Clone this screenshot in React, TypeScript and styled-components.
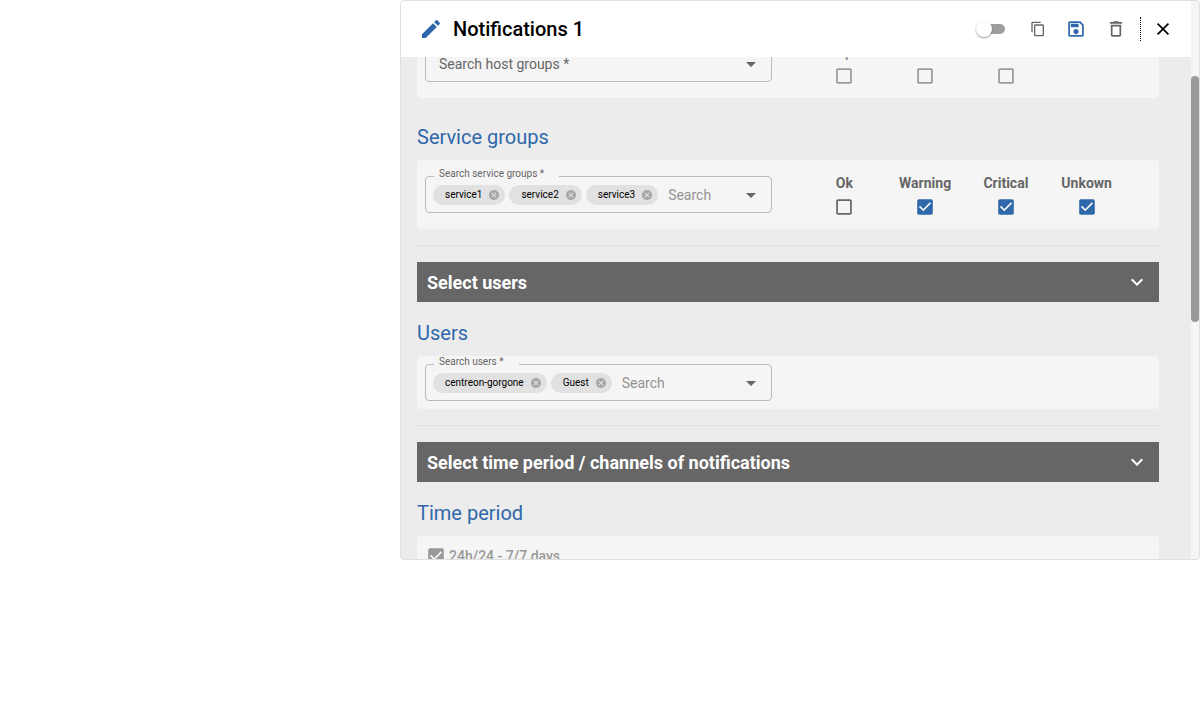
import React, { useLayoutEffect, useRef, useState } from "react";
import styled, { createGlobalStyle } from "styled-components";

const GlobalStyle = createGlobalStyle`
  *, *::before, *::after { box-sizing: border-box; }
  body {
    margin: 0;
    background: #fff;
    color: #000;
    font-family: Roboto, "Liberation Sans", sans-serif;
    font-size: 14px;
  }
  button, input { font: inherit; }
`;

const Panel = styled.section`
  display: flex;
  width: calc(100% / 3 * 2);
  height: calc(100vh - 160px);
  margin-left: auto;
  border: 1px solid #e0e0e0;
  border-radius: 4px;
  background: #ececec;
  overflow: hidden;
`;

const Main = styled.div`
  display: flex;
  flex: 1;
  flex-direction: column;
  min-width: 0;
`;

const ScrollTrack = styled.div`
  flex: 0 0 8px;
  padding-top: 75px;
  background: #f5f5f5;
`;

const ScrollThumb = styled.div`
  height: 51%;
  border-radius: 4px;
  background: #999;
`;

const Header = styled.header`
  display: flex;
  flex: 0 0 56px;
  align-items: center;
  padding: 0 8px 0 18px;
  background: #fff;
`;

const Title = styled.h1`
  flex: 1;
  margin: 0 0 0 10px;
  font-size: 20px;
  font-weight: 500;
  line-height: 32px;
`;

const IconButton = styled.button<{ $width?: number; $color?: string }>`
  display: flex;
  align-items: center;
  justify-content: center;
  width: ${(p) => p.$width ?? 40}px;
  height: 40px;
  padding: 0;
  border: 0;
  background: none;
  color: ${(p) => p.$color ?? "#666"};
  cursor: pointer;
`;

const HeaderDivider = styled.span`
  height: 24px;
  margin: 0 2px 0 4px;
  border-left: 1px dotted #000;
`;

const SwitchInput = styled.input`
  appearance: none;
  width: 26px;
  height: 10px;
  margin: 0 15px 0 0;
  border-radius: 5px;
  background: #9e9e9e;
  cursor: pointer;

  &::before {
    content: "";
    display: block;
    width: 16px;
    height: 16px;
    margin: -3px 0 0 -3px;
    border-radius: 8px;
    background: #fff;
    box-shadow: 0 1px 2px rgba(0, 0, 0, 0.4);
  }
  &:checked { background: #2e68aa; }
  &:checked::before { margin-left: 13px; }
`;

const Body = styled.div`
  flex: 1;
  min-height: 0;
  padding: 0 32px 16px 16px;
  overflow-y: auto;
  scrollbar-width: none;
`;

const GroupTitle = styled.h2<{ $spaced?: boolean }>`
  margin: ${(p) => (p.$spaced ? 24 : 16)}px 0 8px;
  color: #2e68aa;
  font-size: 20px;
  font-weight: 400;
  line-height: 30px;
`;

const Card = styled.div<{ $pad?: number }>`
  display: flex;
  align-items: center;
  gap: 32px;
  padding: ${(p) => p.$pad ?? 8}px 8px;
  border-radius: 4px;
  background: #f5f5f5;
`;

const Rule = styled.hr`
  height: 1px;
  margin: 16px 0;
  border: 0;
  background: #e0e0e0;
`;

const SectionBar = styled.button`
  display: flex;
  align-items: center;
  justify-content: space-between;
  width: 100%;
  height: 40px;
  padding: 0 10px;
  border: 0;
  background: #666;
  color: #fff;
  font-size: 18px;
  font-weight: 700;
  text-align: left;
  cursor: pointer;
`;

const Field = styled.div`
  position: relative;
  display: flex;
  flex: none;
  align-items: center;
  gap: 4px;
  width: calc(50% - 16px);
  height: 37px;
  padding: 0 8px 0 7px;
  border: 1px solid #b9b9b9;
  border-radius: 4px;
`;

const FloatingLabel = styled.label`
  position: absolute;
  top: -9px;
  left: 8px;
  padding: 0 15px 0 5px;
  background: #f5f5f5;
  color: #666;
  font-size: 10px;
  line-height: 12px;
`;

const SearchInput = styled.input<{ $full?: boolean }>`
  flex: 1;
  width: 0;
  min-width: 0;
  padding: 0 6px;
  border: 0;
  outline: 0;
  background: none;
  font-size: 14px;
  line-height: 20px;

  &::placeholder {
    color: ${(p) => (p.$full ? "#666" : "#939393")};
    opacity: 1;
  }
`;

const ArrowButton = styled.button`
  display: flex;
  padding: 0;
  border: 0;
  background: none;
  color: #666;
  cursor: pointer;
`;

const ChipBox = styled.span`
  display: flex;
  flex: none;
  align-items: center;
  gap: 6px;
  height: 20px;
  padding: 0 5px 0 12px;
  border-radius: 10px;
  background: #e1e1e1;
`;

const ChipLabel = styled.span`
  overflow: hidden;
  font-size: 10px;
  line-height: 10px;
  white-space: nowrap;
`;

const ChipRemove = styled.button`
  display: flex;
  padding: 0;
  border: 0;
  background: none;
  color: #a7a7a7;
  cursor: pointer;
`;

const States = styled.div`
  display: grid;
  flex: 1;
  grid-template-columns: repeat(4, minmax(0, 1fr));
  height: 37px;
  padding-right: 24px;
`;

const StateLabel = styled.label<{ $disabled?: boolean }>`
  display: flex;
  flex-direction: column;
  align-items: center;
  gap: 4px;
  margin-top: -2px;
  color: ${(p) => (p.$disabled ? "#999" : "#666")};
  font-size: 14px;
  font-weight: 700;
  line-height: 18px;
`;

const PeriodLabel = styled.label`
  display: flex;
  align-items: center;
  gap: 2px;
  color: #999;
  font-size: 14px;
  font-weight: 500;
  line-height: 24px;
`;

const CheckWrap = styled.span<{ $color: string }>`
  position: relative;
  display: flex;
  color: ${(p) => p.$color};
`;

const HiddenCheck = styled.input`
  position: absolute;
  inset: 0;
  width: 100%;
  height: 100%;
  margin: 0;
  opacity: 0;
`;

const paths = {
  edit: "M3 17.25V21h3.75L17.81 9.94l-3.75-3.75L3 17.25zM20.71 7.04c.39-.39.39-1.02 0-1.41l-2.34-2.34a.9959.9959 0 0 0-1.41 0l-1.83 1.83 3.75 3.75 1.83-1.83z",
  copy: "M16 1H4c-1.1 0-2 .9-2 2v14h2V3h12V1zm3 4H8c-1.1 0-2 .9-2 2v14c0 1.1.9 2 2 2h11c1.1 0 2-.9 2-2V7c0-1.1-.9-2-2-2zm0 16H8V7h11v14z",
  save: "M17 3H5c-1.11 0-2 .9-2 2v14c0 1.1.89 2 2 2h14c1.1 0 2-.9 2-2V7l-4-4zm2 16H5V5h11.17L19 7.83V19zm-7-7c-1.66 0-3 1.34-3 3s1.34 3 3 3 3-1.34 3-3-1.34-3-3-3zM6 6h9v4H6z",
  trash: "M6 19c0 1.1.9 2 2 2h8c1.1 0 2-.9 2-2V7H6v12zM8 9h8v10H8V9zm7.5-5-1-1h-5l-1 1H5v2h14V4z",
  close: "M19 6.41 17.59 5 12 10.59 6.41 5 5 6.41 10.59 12 5 17.59 6.41 19 12 13.41 17.59 19 19 17.59 13.41 12z",
  chevron: "M16.59 8.59 12 13.17 7.41 8.59 6 10l6 6 6-6z",
  arrow: "M7 10l5 5 5-5z",
  cancel: "M12 2C6.47 2 2 6.47 2 12s4.47 10 10 10 10-4.47 10-10S17.53 2 12 2zm5 13.59L15.59 17 12 13.41 8.41 17 7 15.59 10.59 12 7 8.41 8.41 7 12 10.59 15.59 7 17 8.41 13.41 12 17 15.59z",
  checked: "M19 3H5c-1.11 0-2 .9-2 2v14c0 1.1.89 2 2 2h14c1.11 0 2-.9 2-2V5c0-1.1-.89-2-2-2zm-9 14l-5-5 1.41-1.41L10 14.17l7.59-7.59L19 8l-9 9z",
  blank: "M19 5v14H5V5h14m0-2H5c-1.1 0-2 .9-2 2v14c0 1.1.9 2 2 2h14c1.1 0 2-.9 2-2V5c0-1.1-.9-2-2-2z",
};

// Controls use a 22px box with a slim margin round the glyph; sized icons fill theirs.
function Icon({ name, size }: { name: keyof typeof paths; size?: number }) {
  return (
    <svg
      width={size ?? 22}
      height={size ?? 22}
      viewBox={size ? "0 0 24 24" : "-0.7 -0.7 25.4 25.4"}
      fill="currentColor"
      aria-hidden="true"
    >
      <path d={paths[name]} />
    </svg>
  );
}

function Check({ initial = false, disabled = false }: { initial?: boolean; disabled?: boolean }) {
  const [on, setOn] = useState(initial);
  const color = disabled ? "#999" : on ? "#2e68aa" : "#666";
  return (
    <CheckWrap $color={color}>
      <Icon name={on ? "checked" : "blank"} />
      <HiddenCheck type="checkbox" checked={on} disabled={disabled} onChange={() => setOn(!on)} />
    </CheckWrap>
  );
}

function SearchField({ id, label, initial = [] }: { id: string; label: string; initial?: string[] }) {
  const [chips, setChips] = useState(initial);
  const empty = chips.length === 0;
  return (
    <Field>
      {!empty && <FloatingLabel htmlFor={id}>{label} *</FloatingLabel>}
      {chips.map((chip) => (
        <ChipBox key={chip}>
          <ChipLabel>{chip}</ChipLabel>
          <ChipRemove
            type="button"
            aria-label={`Remove ${chip}`}
            onClick={() => setChips(chips.filter((c) => c !== chip))}
          >
            <Icon name="cancel" size={12} />
          </ChipRemove>
        </ChipBox>
      ))}
      <SearchInput
        id={id}
        $full={empty}
        aria-label={label}
        placeholder={empty ? `${label} *` : "Search"}
      />
      <ArrowButton type="button" aria-label="Open">
        <Icon name="arrow" size={24} />
      </ArrowButton>
    </Field>
  );
}

function StateChecks({ names, checked = [], disabled }: { names: string[]; checked?: string[]; disabled?: boolean }) {
  return (
    <States>
      {names.map((name) => (
        <StateLabel key={name} $disabled={disabled}>
          {name}
          <Check initial={checked.includes(name)} disabled={disabled} />
        </StateLabel>
      ))}
    </States>
  );
}

export default function App() {
  const body = useRef<HTMLDivElement>(null);

  useLayoutEffect(() => {
    if (body.current) body.current.scrollTop = 28;
  }, []);

  return (
    <>
      <GlobalStyle />
      <Panel>
        <Main>
          <Header>
            <IconButton type="button" aria-label="Rename" $width={24} $color="#2e68aa">
              <Icon name="edit" size={24} />
            </IconButton>
            <Title>Notifications 1</Title>
            <SwitchInput type="checkbox" role="switch" aria-label="Active" />
            <IconButton type="button" aria-label="Duplicate" $width={36}>
              <Icon name="copy" size={16} />
            </IconButton>
            <IconButton type="button" aria-label="Save" $color="#2e68aa">
              <Icon name="save" />
            </IconButton>
            <IconButton type="button" aria-label="Delete">
              <Icon name="trash" />
            </IconButton>
            <HeaderDivider />
            <IconButton type="button" aria-label="Close" $color="#000">
              <Icon name="close" />
            </IconButton>
          </Header>
          <Body ref={body}>
            <Card $pad={16}>
              <SearchField id="host-groups" label="Search host groups" />
              <StateChecks names={["Up", "Down", "Unreachable"]} disabled />
            </Card>
            <GroupTitle $spaced>Service groups</GroupTitle>
            <Card $pad={16}>
              <SearchField
                id="service-groups"
                label="Search service groups"
                initial={["service1", "service2", "service3"]}
              />
              <StateChecks
                names={["Ok", "Warning", "Critical", "Unkown"]}
                checked={["Warning", "Critical", "Unkown"]}
              />
            </Card>
            <Rule />
            <SectionBar type="button">
              Select users
              <Icon name="chevron" size={24} />
            </SectionBar>
            <GroupTitle>Users</GroupTitle>
            <Card>
              <SearchField id="users" label="Search users" initial={["centreon-gorgone", "Guest"]} />
            </Card>
            <Rule />
            <SectionBar type="button">
              Select time period / channels of notifications
              <Icon name="chevron" size={24} />
            </SectionBar>
            <GroupTitle>Time period</GroupTitle>
            <Card>
              <PeriodLabel>
                <Check initial disabled />
                24h/24 - 7/7 days
              </PeriodLabel>
            </Card>
          </Body>
        </Main>
        <ScrollTrack>
          <ScrollThumb />
        </ScrollTrack>
      </Panel>
    </>
  );
}
